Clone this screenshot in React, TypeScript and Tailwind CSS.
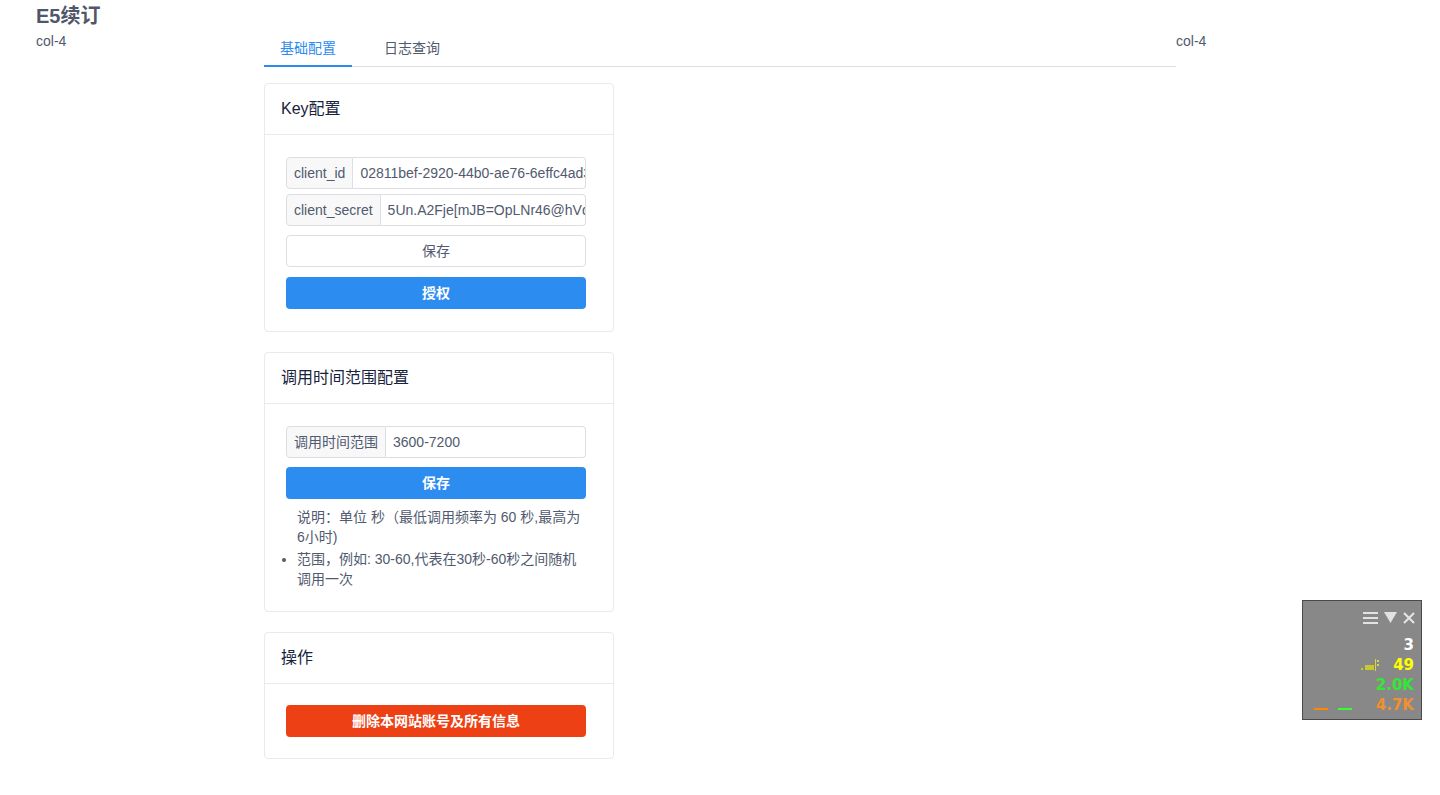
import React from "react";

const font = { fontFamily: '"Liberation Sans", "Noto Sans CJK SC", Arial, sans-serif' };

function Card({ title, children, pb = "pb-[22px]", pt = "pt-[22px]" }: { title: string; children: React.ReactNode; pb?: string; pt?: string }) {
  return (
    <div className="border border-[#e8eaec] rounded-[4px] bg-white">
      <div className="h-[51px] px-4 flex items-center border-b border-[#e8eaec] text-[16px] text-[#17233d]">
        {title}
      </div>
      <div className={`pl-[21px] ${pt} ${pb}`}>
        <div className="w-[300px]">{children}</div>
      </div>
    </div>
  );
}

function InputGroup({ label, value }: { label: string; value: string }) {
  return (
    <div className="flex h-[32px] w-[300px] text-[14px]">
      <div className="flex items-center px-[7px] bg-[#f8f8f9] border border-[#dcdee2] rounded-l-[4px] text-[#515a6e] whitespace-nowrap">
        {label}
      </div>
      <input
        readOnly
        value={value}
        className="flex-1 min-w-0 h-[32px] pl-[7px] border border-l-0 border-[#dcdee2] rounded-r-[4px] text-[#515a6e] text-[14px] bg-white outline-none"
        style={font}
      />
    </div>
  );
}

function Monitor() {
  return (
    <div
      className="fixed left-[1302px] top-[600px] w-[120px] h-[120px] bg-[#888888] border border-[#4a4a4a]"
      style={{ fontFamily: '"DejaVu Sans", sans-serif' }}
    >
      <div className="flex justify-end items-center gap-[6px] pr-[6px] pt-[9px] h-[24px]">
        <svg width="15" height="12" viewBox="0 0 15 12">
          <rect x="0" y="0" width="15" height="2" fill="#e2e2e2" />
          <rect x="0" y="5" width="15" height="2" fill="#e2e2e2" />
          <rect x="0" y="10" width="15" height="2" fill="#e2e2e2" />
        </svg>
        <svg width="13" height="11" viewBox="0 0 13 11">
          <polygon points="0,0 13,0 6.5,11" fill="#e2e2e2" />
        </svg>
        <svg width="12" height="12" viewBox="0 0 12 12">
          <path d="M1 1 L11 11 M11 1 L1 11" stroke="#e2e2e2" strokeWidth="2.2" />
        </svg>
      </div>
      <div className="flex flex-col items-end pr-[7px] pt-[10px] text-[15px] font-bold leading-[20px]">
        <div className="text-white">3</div>
        <div className="flex items-center gap-[14px] text-[#ffff00]">
          <svg width="18" height="12" viewBox="0 0 18 12">
            <rect x="0" y="9" width="2" height="2" fill="#c8c832" />
            <rect x="4" y="6" width="9" height="5" fill="#c8c832" />
            <rect x="14" y="0" width="1" height="12" fill="#d8d838" />
            <rect x="16" y="1" width="2" height="2" fill="#d8d838" />
            <rect x="16" y="5" width="2" height="2" fill="#d8d838" />
          </svg>
          <span>49</span>
        </div>
        <div className="text-[#33e833]">2.0K</div>
        <div className="w-full flex items-center justify-between pl-[11px]">
          <div className="flex items-center gap-[10px] mt-[8px]">
            <div className="w-[14px] h-[2px] bg-[#ff8800]" />
            <div className="w-[14px] h-[2px] bg-[#33ff33]" />
          </div>
          <div className="text-[#f09030]">4.7K</div>
        </div>
      </div>
    </div>
  );
}

export default function App() {
  return (
    <div className="min-h-[795px] bg-white px-[36px] text-[#515a6e]" style={font}>
      <div className="h-[31px] flex items-center text-[20px] font-bold text-[#4f5769] pt-[1px]">E5续订</div>
      <div className="flex">
        <div className="w-[228px] text-[14px] leading-[20px]">col-4</div>
        <div className="w-[912px]">
          <div className="flex border-b border-[#dcdee2] h-[36px] text-[14px]">
            <div className="px-4 flex items-center text-[#2d8cf0] border-b-2 border-[#2d8cf0] -mb-[1px]">基础配置</div>
            <div className="ml-4 px-4 flex items-center text-[#515a6e]">日志查询</div>
          </div>
          <div className="w-[350px] mt-[16px] flex flex-col gap-[20px]">
            <Card title="Key配置">
              <div className="flex flex-col gap-[5px]">
                <InputGroup label="client_id" value="02811bef-2920-44b0-ae76-6effc4ad3e9f" />
                <InputGroup label="client_secret" value="5Un.A2Fje[mJB=OpLNr46@hVq2x" />
              </div>
              <button className="mt-[9px] w-[300px] h-[32px] border border-[#dcdee2] rounded-[4px] bg-white text-[14px] text-[#515a6e]">
                保存
              </button>
              <button className="mt-[10px] w-[300px] h-[32px] rounded-[4px] bg-[#2d8cf0] text-[14px] text-white font-bold">
                授权
              </button>
            </Card>
            <Card title="调用时间范围配置" pb="pb-[22px]">
              <InputGroup label="调用时间范围" value="3600-7200" />
              <button className="mt-[9px] w-[300px] h-[32px] rounded-[4px] bg-[#2d8cf0] text-[14px] text-white font-bold">
                保存
              </button>
              <ul className="mt-[8px] text-[14px] leading-[20px] text-[#515a6e] list-disc pl-[11px] w-[300px]">
                <li className="list-none">说明：单位 秒（最低调用频率为 60 秒,最高为6小时)</li>
                <li className="mt-[2px]">范围，例如: 30-60,代表在30秒-60秒之间随机调用一次</li>
              </ul>
            </Card>
            <Card title="操作" pt="pt-[21px]" pb="pb-[21px]">
              <button className="w-[300px] h-[32px] rounded-[4px] bg-[#ed4014] text-[14px] text-white font-bold">
                删除本网站账号及所有信息
              </button>
            </Card>
          </div>
        </div>
        <div className="text-[14px] leading-[20px]">col-4</div>
      </div>
      <Monitor />
    </div>
  );
}
